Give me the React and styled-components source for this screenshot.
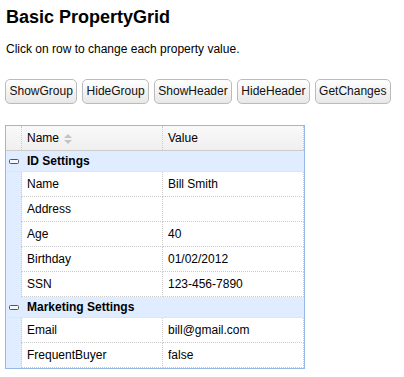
import React from "react";
import styled, { createGlobalStyle } from "styled-components";

const Global = createGlobalStyle`
  html, body { margin: 0; padding: 0; background: #fff; }
  body { font-family: "Liberation Sans", Arial, Helvetica, sans-serif; font-size: 12px; color: #000; }
`;

const Page = styled.div`
  padding: 0 5px;
`;

const Title = styled.h2`
  margin: 7px 0 0 1px;
  font-size: 18px;
  line-height: 21px;
  font-weight: bold;
`;

const Intro = styled.p`
  margin: 14px 0 0 1px;
  font-size: 12px;
  line-height: 14px;
`;

const Toolbar = styled.div`
  display: flex;
  gap: 4.7px;
  margin-top: 23px;
`;

const Button = styled.button`
  height: 25px;
  padding: 0 3.5px;
  margin: 0;
  border: 1px solid #bbb;
  border-radius: 5px;
  background: linear-gradient(to bottom, #ffffff 0%, #f3f3f3 50%, #e8e8e8 100%);
  font-family: "Liberation Sans", Arial, sans-serif;
  font-size: 12px;
  line-height: 23px;
  color: #111;
  cursor: pointer;
`;

const Grid = styled.div`
  margin-top: 21px;
  width: 300px;
  box-sizing: border-box;
  border: 1px solid #95b8e7;
`;

const Row = styled.div`
  display: grid;
  grid-template-columns: 16px 141px 141px;
  box-sizing: border-box;
`;

const HeadRow = styled(Row)`
  height: 25px;
  background: linear-gradient(to bottom, #f9f9f9 0%, #efefef 100%);
  border-bottom: 1px solid #ccc;
`;

const HeadCell = styled.div`
  display: flex;
  align-items: center;
  gap: 5px;
  padding-left: ${(p) => (p.$pad ? "5px" : "0")};
  border-right: 1px dotted #ccc;
  line-height: 14px;
`;

const SortIcon = styled.svg`
  display: block;
  margin-top: 1px;
`;

const GroupRow = styled.div`
  height: 21px;
  box-sizing: border-box;
  background: #e0ecff;
  border-bottom: 1px solid #dde6f3;
  display: grid;
  grid-template-columns: 16px 1fr;
  align-items: center;
  font-weight: bold;
`;

const GroupText = styled.div`
  padding-left: 5px;
  line-height: 14px;
`;

const Expander = styled.svg`
  display: block;
  margin-left: 3px;
`;

const DataRow = styled(Row)`
  height: 25px;
`;

const Gutter = styled.div`
  background: #e0ecff;
  border-right: 1px dotted #ccc;
`;

const Cell = styled.div`
  display: flex;
  align-items: center;
  padding-left: 5px;
  border-right: 1px dotted #ccc;
  border-bottom: 1px dotted #ccc;
  line-height: 14px;
`;

const groups = [
  {
    name: "ID Settings",
    rows: [
      ["Name", "Bill Smith"],
      ["Address", ""],
      ["Age", "40"],
      ["Birthday", "01/02/2012"],
      ["SSN", "123-456-7890"],
    ],
  },
  {
    name: "Marketing Settings",
    rows: [
      ["Email", "bill@gmail.com"],
      ["FrequentBuyer", "false"],
    ],
  },
];

export default function App() {
  return (
    <Page>
      <Global />
      <Title>Basic PropertyGrid</Title>
      <Intro>Click on row to change each property value.</Intro>
      <Toolbar>
        {["ShowGroup", "HideGroup", "ShowHeader", "HideHeader", "GetChanges"].map((b) => (
          <Button key={b}>{b}</Button>
        ))}
      </Toolbar>
      <Grid>
        <HeadRow>
          <HeadCell />
          <HeadCell $pad>
            Name
            <SortIcon width="8" height="10" viewBox="0 0 8 10">
              <path d="M4 0 L8 4 L0 4 Z" fill="#c4c4c4" />
              <path d="M0 6 L8 6 L4 10 Z" fill="#c4c4c4" />
            </SortIcon>
          </HeadCell>
          <HeadCell $pad>Value</HeadCell>
        </HeadRow>
        {groups.map((g) => (
          <React.Fragment key={g.name}>
            <GroupRow>
              <Expander width="10" height="5" viewBox="0 0 10 5">
                <rect x="0.5" y="0.5" width="9" height="4" rx="1" fill="#f4f7fb" stroke="#555" strokeWidth="1" />
              </Expander>
              <GroupText>{g.name}</GroupText>
            </GroupRow>
            {g.rows.map(([k, v]) => (
              <DataRow key={k}>
                <Gutter />
                <Cell>{k}</Cell>
                <Cell>{v}</Cell>
              </DataRow>
            ))}
          </React.Fragment>
        ))}
      </Grid>
    </Page>
  );
}
